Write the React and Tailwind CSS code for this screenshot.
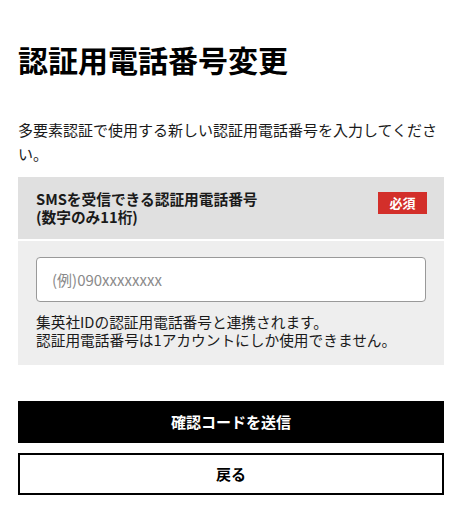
export default function App() {
  return (
    <div
      className="min-h-[530px] bg-white px-[18px] pt-[38px] pb-[36px] text-[#1a1a1a]"
      style={{ fontFamily: '"Noto Sans CJK JP", "Noto Sans", sans-serif' }}
    >
      <h1 className="text-[30px] font-bold leading-[42px] text-black">認証用電話番号変更</h1>

      <p className="mt-[38px] text-[15px] leading-[24px]">
        多要素認証で使用する新しい認証用電話番号を入力してください。
      </p>

      {/* Phone field */}
      <div className="mt-[11px]">
        <div className="flex h-[62px] items-start justify-between bg-[#e0e0e0] pl-[18px] pr-[17px] pt-[13px]">
          <label className="text-[14.7px] font-bold leading-[18px]">
            SMSを受信できる認証用電話番号
            <br />
            (数字のみ11桁)
          </label>
          <span className="mt-[2px] flex h-[22px] w-[49px] items-center justify-center bg-[#d32f2a] text-[13px] font-bold text-white">
            必須
          </span>
        </div>
        <div className="mt-[2px] bg-[#eeeeee] px-[18px] pt-[16px] pb-[16px]">
          <input
            type="tel"
            placeholder="(例)090xxxxxxxx"
            className="block h-[45px] w-full rounded-[4px] border border-[#999999] bg-white px-[15px] text-[15px] text-black placeholder-[#8a8a8a] outline-none"
          />
          <p className="mt-[11px] text-[14.7px] leading-[18px]">
            集英社IDの認証用電話番号と連携されます。
            <br />
            認証用電話番号は1アカウントにしか使用できません。
          </p>
        </div>
      </div>

      {/* Actions */}
      <div className="mt-[36px] flex flex-col gap-[10px]">
        <button className="h-[42px] w-full bg-black text-[15px] font-bold text-white">
          確認コードを送信
        </button>
        <button className="h-[42px] w-full border-2 border-black bg-white text-[15px] font-bold text-black">
          戻る
        </button>
      </div>
    </div>
  );
}
